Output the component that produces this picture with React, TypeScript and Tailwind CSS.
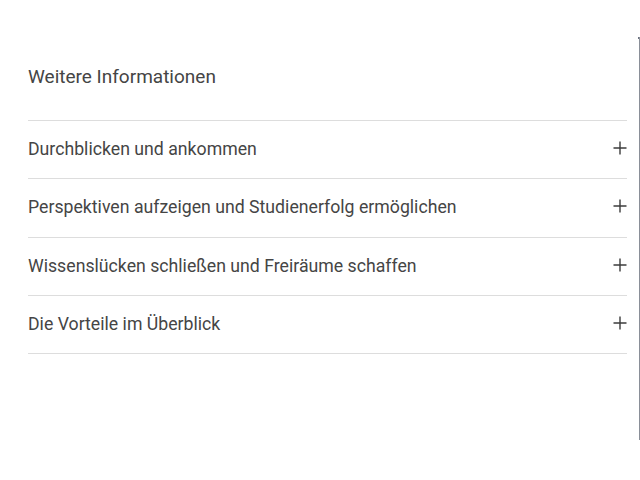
import React from "react";

const items = [
  "Durchblicken und ankommen",
  "Perspektiven aufzeigen und Studienerfolg ermöglichen",
  "Wissenslücken schließen und Freiräume schaffen",
  "Die Vorteile im Überblick",
];

function Plus() {
  return (
    <svg width="14" height="14" viewBox="0 0 14 14" className="shrink-0 -mt-[3px]">
      <path d="M7 0.5V13.5M0.5 7H13.5" stroke="#3c3c3c" strokeWidth="1.4" />
    </svg>
  );
}

export default function App() {
  return (
    <div
      className="flex w-[640px] h-[480px] bg-white text-[#454545]"
      style={{ fontFamily: "Roboto, 'Noto Sans', sans-serif" }}
    >
      <div className="flex-1 pl-[28px] pr-[11px]">
        <h2 className="pt-[65px] h-[120px] text-[19px] leading-[24px] font-normal">
          Weitere Informationen
        </h2>
        <div className="border-t border-[#dddddd]">
          {items.map((t) => (
            <div
              key={t}
              className="flex items-center justify-between h-[58.3px] border-b border-[#dddddd]"
            >
              <span className="text-[17.7px] leading-[24px] -mt-[1px]">{t}</span>
              <Plus />
            </div>
          ))}
        </div>
      </div>
      <div className="flex w-[2px] pt-[37px] h-[440px]">
        <div className="w-px h-[2px] bg-[#6b7280]" />
        <div className="w-px h-full bg-[#8a8f98]" />
      </div>
    </div>
  );
}
